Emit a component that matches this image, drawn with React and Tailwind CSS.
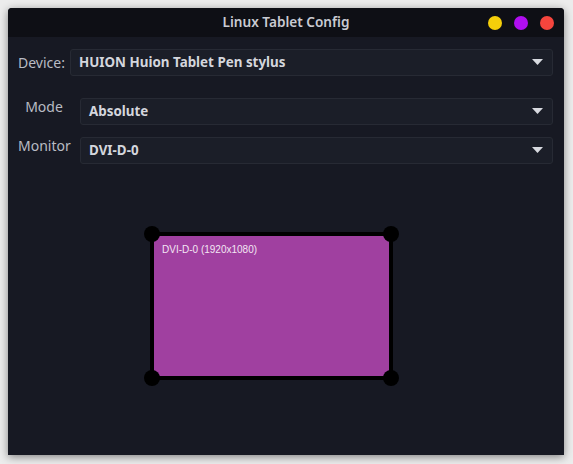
import React from 'react';

function Select({ value }) {
    return (
        <div className="flex-1 h-[27px] flex items-center justify-between bg-[#1b1e28] border border-[#272a34] rounded-[3px] pl-[8px] pr-[8px]">
            <span className="text-[13.4px] font-bold text-[#d4d6dd] leading-none">{value}</span>
            <svg width="11" height="7" viewBox="0 0 11 7" className="mr-[1px]">
                <path d="M0 0H11L5.5 6Z" fill="#d8dae0" />
            </svg>
        </div>
    );
}

export default function App() {
    return (
        <div className="w-[573px] h-[464px] bg-[#ececec] p-[8px] pr-[9px] pb-[9px] font-['Noto_Sans',sans-serif]">
            <div className="w-[556px] h-[447px] flex flex-col bg-[#171923] rounded-t-[4px] overflow-hidden shadow-[0_2px_9px_rgba(0,0,0,0.45)]">

                {/* Title bar */}
                <div className="relative h-[29px] shrink-0 bg-[#0e0f15] flex items-center justify-center">
                    <span className="text-[13.6px] font-semibold text-[#c9cbd2]">Linux Tablet Config</span>
                    <div className="absolute right-[10px] top-[8px] flex gap-[12px]">
                        <span className="w-[14px] h-[14px] rounded-full bg-[#f5cf0a]" />
                        <span className="w-[14px] h-[14px] rounded-full bg-[#b00ef0]" />
                        <span className="w-[14px] h-[14px] rounded-full bg-[#f5453d]" />
                    </div>
                </div>

                {/* Form */}
                <div className="pl-[10px] pr-[11px] pt-[12px] flex flex-col">
                    <div className="flex items-center gap-[5px]">
                        <span className="text-[14px] text-[#b9bcc4]">Device:</span>
                        <Select value="HUION Huion Tablet Pen stylus" />
                    </div>
                    <div className="flex items-start mt-[22px]">
                        <span className="w-[52px] text-center text-[14px] leading-[18px] text-[#b9bcc4]">Mode</span>
                        <div className="flex-1 flex ml-[10px]"><Select value="Absolute" /></div>
                    </div>
                    <div className="flex items-start mt-[12px]">
                        <span className="w-[52px] text-center text-[14px] leading-[18px] text-[#b9bcc4]">Monitor</span>
                        <div className="flex-1 flex ml-[10px]"><Select value="DVI-D-0" /></div>
                    </div>
                </div>

                {/* Monitor canvas */}
                <div className="ml-[142px] mt-[68px]">
                    <div className="relative w-[243px] h-[148px] border-4 border-black bg-[#a040a0]">
                        <span className="absolute left-[8px] top-[6px] font-['Liberation_Sans',sans-serif] text-[10px] text-[#f3e6f3]">DVI-D-0 (1920x1080)</span>
                        <span className="absolute -left-[10px] -top-[10px] w-[16px] h-[16px] rounded-full bg-black" />
                        <span className="absolute -right-[10px] -top-[10px] w-[16px] h-[16px] rounded-full bg-black" />
                        <span className="absolute -left-[10px] -bottom-[10px] w-[16px] h-[16px] rounded-full bg-black" />
                        <span className="absolute -right-[10px] -bottom-[10px] w-[16px] h-[16px] rounded-full bg-black" />
                    </div>
                </div>
            </div>
        </div>
    );
}
